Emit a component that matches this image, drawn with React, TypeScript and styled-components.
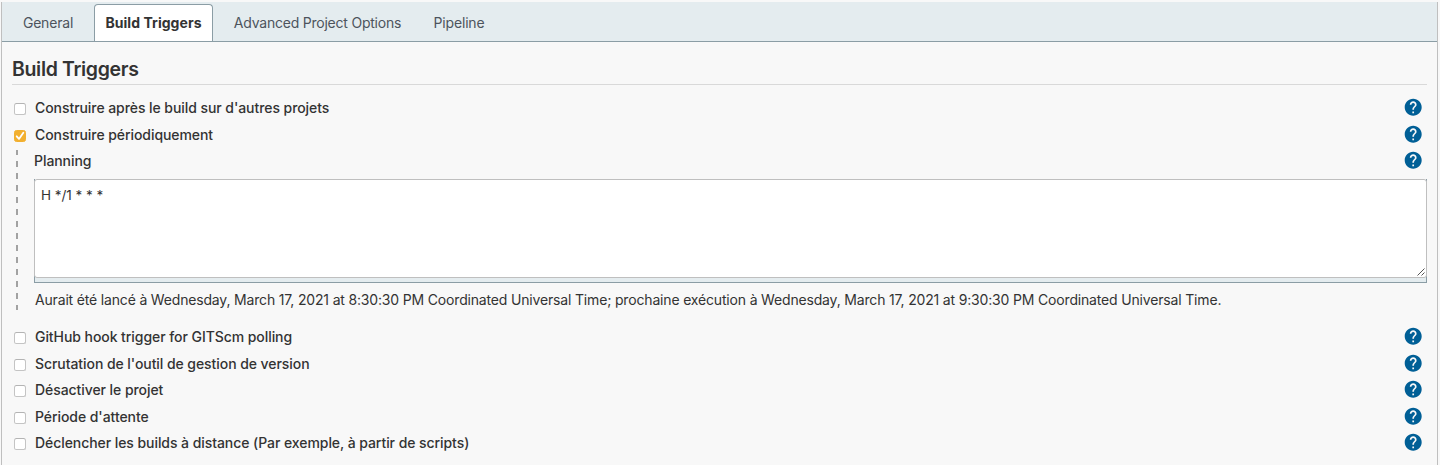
import React from "react";
import styled, { createGlobalStyle, css } from "styled-components";
import { MdHelp } from "react-icons/md";

const GlobalStyle = createGlobalStyle`
  * { box-sizing: border-box; }
  body {
    margin: 0;
    background: #f8f8f8;
    color: #333;
    font-family: Inter, "Liberation Sans", sans-serif;
    font-size: 14px;
    overflow: hidden;
  }
`;

const Page = styled.main`
  height: 463px;
  margin: 2px 2px 0 1px;
  border: solid #bfbfbf;
  border-width: 0 1px;
`;

const TabBar = styled.nav`
  display: flex;
  align-items: flex-end;
  height: 40px;
  padding-left: 10px;
  background: #e4ecef;
  border-bottom: 1px solid #8b9da5;
`;

const Tab = styled.a<{ $active?: boolean; $width: number; $spacing: number }>`
  flex: none;
  width: ${(p) => p.$width}px;
  height: 38px;
  line-height: 40px;
  text-align: center;
  white-space: nowrap;
  letter-spacing: ${(p) => p.$spacing}px;
  color: #4d545d;
  ${(p) =>
    p.$active &&
    css`
      height: 37px;
      margin-left: 10px;
      line-height: 36px;
      color: #333;
      font-weight: 700;
      background: #fff;
      border: 1px solid #8b9da5;
      border-bottom: 0;
      border-radius: 4px 4px 0 0;
    `}
`;

const Content = styled.section`
  padding: 0 10px;
`;

const Heading = styled.h1`
  height: 43px;
  margin: 0 0 10px;
  padding-top: 15px;
  border-bottom: 1px solid #d9d9d9;
  font-size: 19.5px;
  line-height: 24px;
  font-weight: 600;
  letter-spacing: -0.34px;
`;

const Row = styled.div`
  display: flex;
  align-items: center;
  height: 26.5px;
  padding: 0 5px 0 2px;
`;

const Label = styled.label`
  flex: 1;
  line-height: 20px;
  font-weight: 500;
  white-space: nowrap;
  letter-spacing: -0.065px;
`;

const Box = styled.span<{ $checked?: boolean }>`
  display: flex;
  width: 12px;
  height: 12px;
  margin: 2px 9px 0 0;
  border: 1px solid ${(p) => (p.$checked ? "#f2b030" : "#c4c4c4")};
  border-top-color: ${(p) => (p.$checked ? "#f2b030" : "#b4b4b4")};
  border-radius: 2.5px;
  background: ${(p) => (p.$checked ? "#f2b030" : "#fff")};
`;

const HelpIcon = styled(MdHelp)`
  flex: none;
  width: 20.4px;
  height: 20.4px;
  margin: -2px -1px 0 0;
  color: #005f96;
`;

const Nested = styled.div`
  display: flex;
  height: 160px;
  margin: 2px 0 14px;
`;

const Rail = styled.div`
  width: 2px;
  margin: 0 16px 0 4px;
  background: repeating-linear-gradient(#a2a2a2 0 6px, transparent 6px 12px) 0 -1px / 2px 180px;
`;

const Fields = styled.div`
  flex: 1;
  min-width: 0;
`;

const PlanningRow = styled(Row)`
  height: 22px;
  padding-left: 0;
  margin-bottom: 7px;
`;

const Editor = styled.div`
  height: 104px;
  border: 1px solid #8b9da5;
  border-top: 0;
  background: linear-gradient(#f8f8f8 90px, #e4ecef 90px);
`;

const Cron = styled.div`
  display: flex;
  justify-content: space-between;
  height: 99px;
  margin: 0 -1px;
  padding: 5px 0 0 6px;
  border: 1px solid #bfbfbf;
  border-radius: 3px;
  background: #fff;
  font-size: 13.5px;
  line-height: 20px;
  letter-spacing: -0.03px;
`;

const Grip = styled.svg`
  align-self: flex-end;
  margin: 0 1px 1px 0;
`;

const Message = styled.p`
  margin: 7px 0 0 1px;
  line-height: 20px;
  white-space: nowrap;
  letter-spacing: -0.171px;
`;

interface TriggerProps {
  label: string;
  checked?: boolean;
}

const Trigger = ({ label, checked }: TriggerProps) => (
  <Row>
    <Box $checked={checked}>
      {checked && (
        <svg width="10" height="10" viewBox="0 0 10 10" fill="none">
          <path d="M1.7 5.3 4 7.9 8.3 1.8" stroke="#fff" strokeWidth="1.8" strokeLinecap="round" strokeLinejoin="round" />
        </svg>
      )}
    </Box>
    <Label>{label}</Label>
    <HelpIcon />
  </Row>
);

const App = () => (
  <>
    <GlobalStyle />
    <Page>
      <TabBar>
        <Tab $width={72} $spacing={-0.2}>General</Tab>
        <Tab $width={119} $spacing={0.05} $active>Build Triggers</Tab>
        <Tab $width={209} $spacing={-0.22}>Advanced Project Options</Tab>
        <Tab $width={74} $spacing={-0.18}>Pipeline</Tab>
      </TabBar>
      <Content>
        <Heading>Build Triggers</Heading>
        <Trigger label="Construire après le build sur d'autres projets" />
        <Trigger label="Construire périodiquement" checked />
        <Nested>
          <Rail />
          <Fields>
            <PlanningRow>
              <Label>Planning</Label>
              <HelpIcon />
            </PlanningRow>
            <Editor>
              <Cron>
                <span>H */1 * * *</span>
                <Grip width="8" height="8" viewBox="0 0 8 8" stroke="#555" fill="none">
                  <path d="M0.5 7.5 7.5 0.5M4.5 7.5 7.5 4.5" />
                </Grip>
              </Cron>
            </Editor>
            <Message>
              Aurait été lancé à Wednesday, March 17, 2021 at 8:30:30 PM Coordinated Universal Time; prochaine exécution à Wednesday, March 17, 2021 at 9:30:30 PM Coordinated Universal Time.
            </Message>
          </Fields>
        </Nested>
        <Trigger label="GitHub hook trigger for GITScm polling" />
        <Trigger label="Scrutation de l'outil de gestion de version" />
        <Trigger label="Désactiver le projet" />
        <Trigger label="Période d'attente" />
        <Trigger label="Déclencher les builds à distance (Par exemple, à partir de scripts)" />
      </Content>
    </Page>
  </>
);

export default App;
